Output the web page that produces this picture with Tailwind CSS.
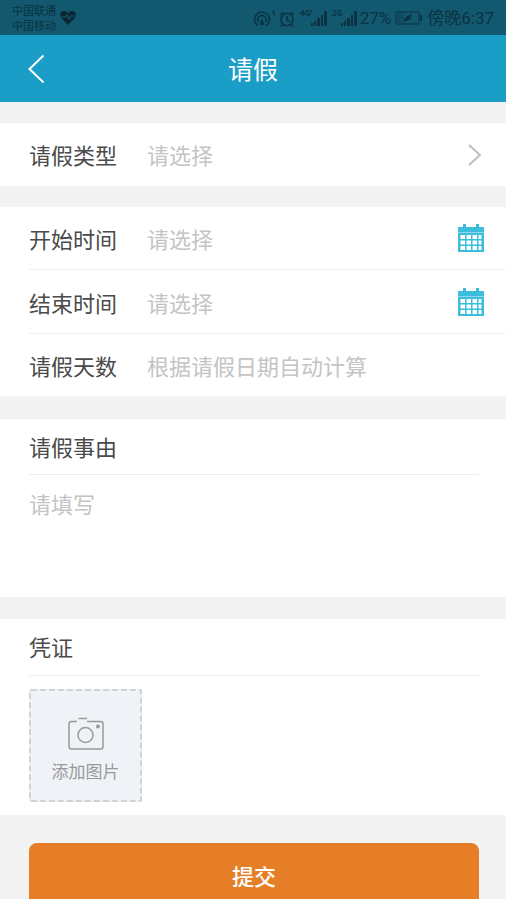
<!DOCTYPE html>
<html lang="zh-CN">
<head>
<meta charset="utf-8">
<meta name="viewport" content="width=device-width, initial-scale=1">
<title>请假</title>
<script src="https://cdn.jsdelivr.net/npm/@tailwindcss/browser@4"></script>
</head>
<body class="bg-white pr-px font-['Noto_Sans_CJK_SC',sans-serif] text-[22px] leading-8 text-[#4a4a4a]">
<svg class="hidden" aria-hidden="true">
  <symbol id="calendar" viewBox="0 0 28 30">
    <path fill="#3bbddb" d="M6 1h3v4H6zM19 1h3v4h-3zM1 4h26v5H1z"/>
    <path fill="#3bbddb" opacity=".6" d="M1 9h26v1H1z"/>
    <path fill="#3bbddb" fill-rule="evenodd" d="M1 10h26v19H1zM3.500 12v4H8v-4zM9.500 12v4H14v-4zM15.500 12v4H20v-4zM21.500 12v4h3v-4zM3.500 17.500v4H8v-4zM9.500 17.500v4H14v-4zM15.500 17.500v4H20v-4zM21.500 17.500v4h3v-4zM3.500 23v4H8v-4zM9.500 23v4H14v-4zM15.500 23v4H20v-4zM21.500 23v4h3v-4z"/>
  </symbol>
</svg>

<div class="flex h-[35px] items-center justify-between bg-[#12586f] px-3 text-[#0a3343]">
  <div class="flex items-center gap-1">
    <div class="text-[11px] leading-[15px]"><p>中国联通</p><p>中国移动</p></div>
    <svg class="h-[15px] w-4" viewBox="0 0 16 15"><path fill="#082733" d="M8 15 1.500 8C-1 5 .5 1 4 1c2 0 3.200 1 4 2.500C8.800 2 10 1 12 1c3.500 0 5 4 2.500 7z"/><path fill="none" stroke="#12586f" stroke-width="1.200" d="M1 7h4l2-2 2 4 2-3h4"/></svg>
  </div>
  <div class="flex items-center text-[17px] leading-6">
    <svg class="h-[22px] w-[107px]" viewBox="0 0 107 22" fill="none" stroke="currentColor" stroke-width="1.600">
      <path d="M4.500 18.500a7.500 7.500 0 1 1 9 0M5.500 15a4.200 4.200 0 1 1 7 0"/><path d="m9 11 2.500 7h-5z" fill="currentColor" stroke="none"/><path stroke-width="1.200" d="m19 5 2-1v5"/>
      <circle cx="34" cy="12.500" r="6"/><path d="M34 9v4l3 1.500M27 8l3.500-3M37.500 5 41 8M30 17.500l-2 2M38 17.500l2 2"/>
      <g fill="currentColor" stroke="none"><path d="M58 16h2v3h-2zM61 14h2v5h-2zM64 11h3v8h-3zM68 8h2v11h-2zM71 4h3v15h-3zM88 16h2v3h-2zM91 14h2v5h-2zM94 11h3v8h-3zM98 8h2v11h-2zM101 4h3v15h-3z"/>
      <text x="47" y="9" font-size="8" font-weight="700">4G⁺</text><text x="79" y="9" font-size="8" font-weight="700">2G</text></g>
    </svg>
    <span class="font-['Roboto',sans-serif]">27%</span>
    <svg class="mx-1 h-4 w-7" viewBox="0 0 28 16"><rect x="1" y="2" width="23" height="12" rx="1" fill="none" stroke="currentColor" stroke-opacity=".7" stroke-width="1.300"/><path fill="currentColor" d="M2 3h7v10H2z" opacity=".3"/><path fill="currentColor" d="M25 5h2v6h-2zM9 12c0-5 3-6 8-8-1 5-3 7-6 7z"/></svg>
    <span>傍晚<span class="font-['Roboto',sans-serif]">6:37</span></span>
  </div>
</div>

<header class="grid h-[67px] grid-cols-[80px_1fr_80px] items-center bg-[#1a9dc6] text-white">
  <button type="button" aria-label="返回" class="flex h-full items-center pl-7">
    <svg class="h-[30px] w-[17px]" viewBox="0 0 17 30" fill="none" stroke="currentColor" stroke-width="2"><path d="M15.500 1.500 1.500 15l14 13.500"/></svg>
  </button>
  <h1 class="pb-0.5 text-center text-[25px]">请假</h1>
</header>

<form class="bg-[#f3f3f3]">
  <div class="pt-5">
    <div class="flex h-16 items-center border-t border-[#eeeeee] bg-white pr-6 pl-[29px]">
      <label for="type" class="w-[118px] shrink-0 pb-0.5">请假类型</label>
      <select id="type" class="min-w-0 flex-1 appearance-none pb-0.5 text-[#c4c4c4] outline-none"><option>请选择</option></select>
      <svg class="h-6 w-[15px]" viewBox="0 0 15 24" fill="none" stroke="#bdbdbd" stroke-width="2"><path d="m2 2 11 10L2 22"/></svg>
    </div>
  </div>

  <div class="pt-[21px]">
    <div class="bg-white pl-[29px]">
      <div class="flex h-[63px] items-center border-b border-[#f0f0f0] pr-[21px]">
        <label for="start" class="w-[118px] shrink-0">开始时间</label>
        <input id="start" type="text" readonly placeholder="请选择" class="min-w-0 flex-1 outline-none placeholder:text-[#c4c4c4]">
        <button type="button" aria-label="选择开始时间"><svg class="block h-[30px] w-7"><use href="#calendar"/></svg></button>
      </div>
      <div class="flex h-16 items-center border-b border-[#f0f0f0] pr-[21px]">
        <label for="end" class="w-[118px] shrink-0">结束时间</label>
        <input id="end" type="text" readonly placeholder="请选择" class="min-w-0 flex-1 outline-none placeholder:text-[#c4c4c4]">
        <button type="button" aria-label="选择结束时间"><svg class="block h-[30px] w-7"><use href="#calendar"/></svg></button>
      </div>
      <div class="flex h-[62px] items-center pr-[21px]">
        <label for="days" class="w-[118px] shrink-0">请假天数</label>
        <input id="days" type="text" readonly placeholder="根据请假日期自动计算" class="min-w-0 flex-1 outline-none placeholder:text-[#c4c4c4]">
      </div>
    </div>
  </div>

  <div class="pt-[22px]">
    <div class="border-t border-[#eeeeee] bg-white pr-[27px] pl-[29px]">
      <label for="reason" class="flex h-14 items-center border-b border-[#ededed] pb-0.5">请假事由</label>
      <textarea id="reason" placeholder="请填写" class="block h-[122px] w-full resize-none pt-3 outline-none placeholder:text-[#c4c4c4]"></textarea>
    </div>
  </div>

  <div class="pt-[22px]">
    <section class="bg-white pt-px pr-[27px] pb-[13px] pl-[29px]">
      <h2 class="flex h-14 items-center border-b border-[#ededed] pb-1">凭证</h2>
      <button type="button" class="relative mt-[13px] flex h-[113px] w-[113px] flex-col items-center justify-center gap-2 bg-[#eff3f7] pt-2 text-[17px] leading-6 text-[#999999]">
        <svg class="absolute inset-0 h-full w-full" fill="none" stroke="#d3d3d5" stroke-width="2" aria-hidden="true"><rect x="1" y="1" width="111" height="111" rx="1" stroke-dasharray="6 3"/></svg>
        <svg class="h-[34px] w-9" viewBox="0 0 36 34" fill="none" stroke="#999" stroke-width="1.500"><path d="M9 4.500H3.500Q1 4.500 1 7v22.500Q1 32 3.500 32h29q2.500 0 2.500-2.500V7q0-2.500-2.500-2.500H19M10.500 1.500H19"/><circle cx="17.500" cy="18" r="7.500"/><circle cx="30" cy="9.500" r="2" fill="#999" stroke="none"/></svg>
        <span>添加图片</span>
      </button>
    </section>
  </div>

  <div class="pt-7 pr-[27px] pl-[29px]">
    <button type="submit" class="flex h-14 w-full items-start justify-center rounded-t-lg bg-[#e67e27] pt-4 font-medium text-white">提交</button>
  </div>
</form>
</body>
</html>
